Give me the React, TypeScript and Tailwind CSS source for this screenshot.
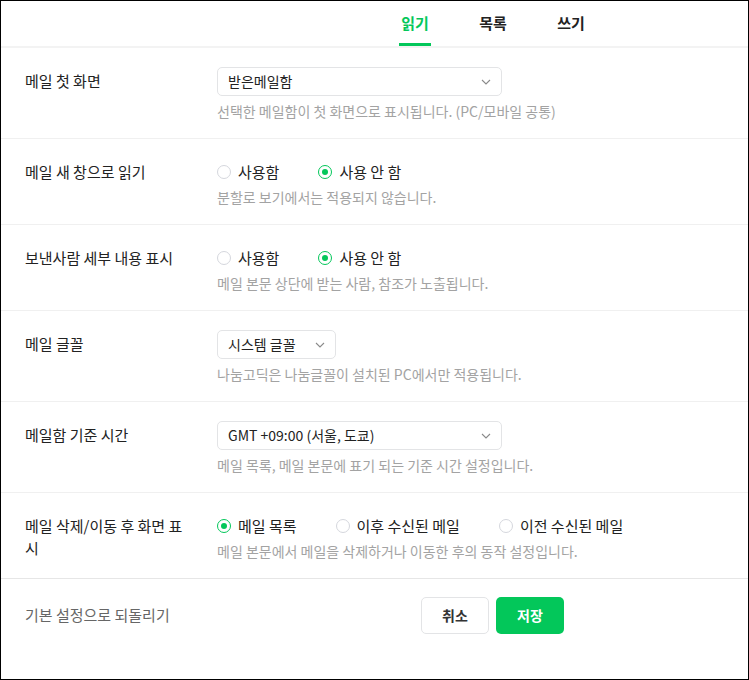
import { useState } from "react";

const FONT = { fontFamily: '"Malgun Gothic", "Noto Sans CJK KR", "Noto Sans", sans-serif' };

const TABS = ["읽기", "목록", "쓰기"];

function Chevron() {
  return (
    <svg width="10" height="6" viewBox="0 0 10 6" fill="none" className="shrink-0">
      <path d="M1 1l4 4 4-4" stroke="#8a8a8a" strokeWidth="1.1" />
    </svg>
  );
}

function Select({ value, width }: { value: string; width: string }) {
  return (
    <div
      className={`${width} h-[29px] flex items-center justify-between pl-[10px] pr-[10px] border border-[#e3e4e6] rounded-[5px] text-[14px] text-[#222] bg-white`}
    >
      <span>{value}</span>
      <Chevron />
    </div>
  );
}

function Radio({ label, checked, onClick }: { label: string; checked: boolean; onClick: () => void }) {
  return (
    <button onClick={onClick} className="flex items-center gap-[7px] text-[15px] text-[#222]">
      <span
        className={`w-[14px] h-[14px] rounded-full flex items-center justify-center border ${
          checked ? "border-[#03c75a] border-[1.5px]" : "border-[#d5d7dd]"
        }`}
      >
        {checked && <span className="w-[6px] h-[6px] rounded-full bg-[#03c75a]" />}
      </span>
      {label}
    </button>
  );
}

function RadioGroup({ options, initial }: { options: string[]; initial: number }) {
  const [sel, setSel] = useState(initial);
  return (
    <div className="h-[30px] flex items-center gap-[39px]">
      {options.map((o, i) => (
        <Radio key={o} label={o} checked={sel === i} onClick={() => setSel(i)} />
      ))}
    </div>
  );
}

function Row({
  label,
  help,
  kind,
  children,
}: {
  label: string;
  help: string;
  kind: "select" | "radio";
  children: React.ReactNode;
}) {
  const isSelect = kind === "select";
  return (
    <div className={`flex pl-6 pb-[18px] border-b border-[#f0f0f0] ${isSelect ? "pt-[19px]" : "pt-[18px]"}`}>
      <div
        className={`w-[162px] shrink-0 text-[15px] leading-[22px] text-[#222] ${isSelect ? "pt-[3px]" : "pt-[4px]"}`}
      >
        {label}
      </div>
      <div className="ml-[30px] flex flex-col">
        {children}
        <p className={`text-[14px] leading-[18px] text-[#a3a3a3] ${isSelect ? "mt-[6px]" : "mt-[1px]"}`}>{help}</p>
      </div>
    </div>
  );
}

export default function App() {
  const [tab, setTab] = useState(0);

  return (
    <div style={FONT} className="w-[749px] h-[680px] border border-black bg-white flex flex-col">
      {/* Tabs */}
      <div className="h-[47px] shrink-0 border-b-2 border-[#f3f3f3] flex pl-[398px] gap-[46px]">
        {TABS.map((t, i) => (
          <button
            key={t}
            onClick={() => setTab(i)}
            className={`w-[32px] h-full flex items-center justify-center pt-[3px] border-b-[3px] text-[15px] font-bold ${
              tab === i ? "border-[#03c75a] text-[#03c75a]" : "border-transparent text-[#222]"
            }`}
          >
            {t}
          </button>
        ))}
      </div>

      <Row label="메일 첫 화면" help="선택한 메일함이 첫 화면으로 표시됩니다. (PC/모바일 공통)" kind="select">
        <Select value="받은메일함" width="w-[285px]" />
      </Row>

      <Row label="메일 새 창으로 읽기" help="분할로 보기에서는 적용되지 않습니다." kind="radio">
        <RadioGroup options={["사용함", "사용 안 함"]} initial={1} />
      </Row>

      <Row label="보낸사람 세부 내용 표시" help="메일 본문 상단에 받는 사람, 참조가 노출됩니다." kind="radio">
        <RadioGroup options={["사용함", "사용 안 함"]} initial={1} />
      </Row>

      <Row label="메일 글꼴" help="나눔고딕은 나눔글꼴이 설치된 PC에서만 적용됩니다." kind="select">
        <Select value="시스템 글꼴" width="w-[119px]" />
      </Row>

      <Row label="메일함 기준 시간" help="메일 목록, 메일 본문에 표기 되는 기준 시간 설정입니다." kind="select">
        <Select value="GMT +09:00 (서울, 도쿄)" width="w-[285px]" />
      </Row>

      <Row
        label="메일 삭제/이동 후 화면 표시"
        help="메일 본문에서 메일을 삭제하거나 이동한 후의 동작 설정입니다."
        kind="radio"
      >
        <RadioGroup options={["메일 목록", "이후 수신된 메일", "이전 수신된 메일"]} initial={0} />
      </Row>

      {/* Footer */}
      <div className="flex items-center justify-between pl-6 pr-[184px] pt-[18px] border-t border-[#e6e6e6] -mt-px">
        <button className="text-[15px] text-[#666]">기본 설정으로 되돌리기</button>
        <div className="flex gap-[7px]">
          <button className="w-[68px] h-[37px] rounded-[5px] border border-[#e3e4e6] bg-white text-[14px] font-bold text-[#333]">
            취소
          </button>
          <button className="w-[68px] h-[37px] rounded-[5px] bg-[#03c75a] text-[14px] font-bold text-white">
            저장
          </button>
        </div>
      </div>
    </div>
  );
}
